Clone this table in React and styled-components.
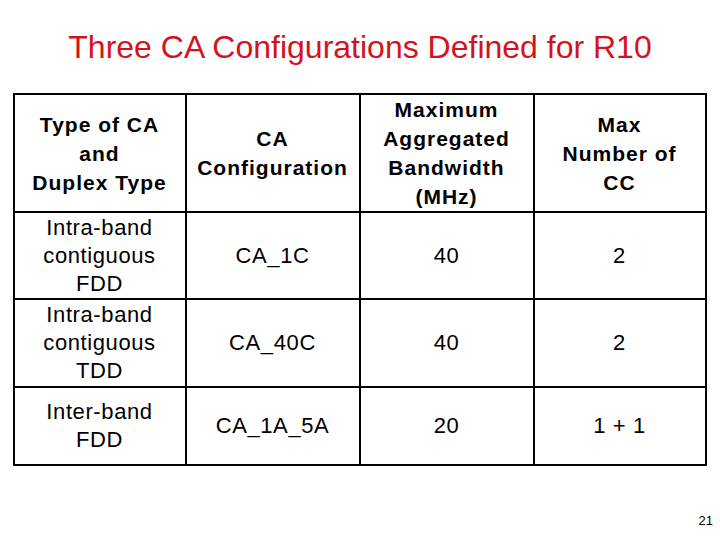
import React from "react";
import styled, { createGlobalStyle } from "styled-components";

const Global = createGlobalStyle`
  html, body { margin: 0; padding: 0; background: #fff; }
  body { font-family: "Liberation Sans", Arial, sans-serif; }
`;

const Slide = styled.div`
  width: 720px;
  height: 540px;
  position: relative;
  box-sizing: border-box;
  padding-top: 28px;
  display: flex;
  flex-direction: column;
  align-items: center;
  background: #fff;
`;

const Title = styled.h1`
  margin: 0;
  font-family: "Liberation Sans", Arial, sans-serif;
  font-weight: normal;
  font-size: 32px;
  line-height: 38px;
  color: #d4121c;
  text-align: center;
`;

const Table = styled.table`
  margin-top: 27px;
  margin-left: -1px;
  border-collapse: collapse;
  table-layout: fixed;
  width: 692px;
  color: #000;
`;

const Col = styled.col`
  width: ${(p) => p.$w}px;
`;

const Row = styled.tr`
  height: ${(p) => p.$h}px;
`;

const Cell = styled.td`
  border: 2px solid #000;
  padding: 0;
  text-align: center;
  vertical-align: middle;
  font-family: "Liberation Sans", Arial, sans-serif;
  font-size: ${(p) => (p.$head ? "21px" : "22px")};
  font-weight: ${(p) => (p.$head ? "bold" : "normal")};
  letter-spacing: ${(p) => (p.$head ? "1px" : "0.6px")};
  line-height: ${(p) => (p.$head ? "29px" : "28px")};
`;

const PageNum = styled.div`
  position: absolute;
  right: 7px;
  bottom: 12px;
  font-size: 13px;
  color: #000;
`;

const header = [
  ["Type of CA", "and", "Duplex Type"],
  ["CA", "Configuration"],
  ["Maximum", "Aggregated", "Bandwidth", "(MHz)"],
  ["Max", "Number of", "CC"],
];

const rows = [
  { h: 87, cells: [["Intra-band", "contiguous", "FDD"], ["CA_1C"], ["40"], ["2"]] },
  { h: 88, cells: [["Intra-band", "contiguous", "TDD"], ["CA_40C"], ["40"], ["2"]] },
  { h: 78, cells: [["Inter-band", "FDD"], ["CA_1A_5A"], ["20"], ["1 + 1"]] },
];

const Lines = ({ lines }) =>
  lines.map((l, i) => (
    <React.Fragment key={i}>
      {i > 0 && <br />}
      {l}
    </React.Fragment>
  ));

export default function App() {
  return (
    <>
      <Global />
      <Slide>
        <Title>Three CA Configurations Defined for R10</Title>
        <Table>
          <colgroup>
            <Col $w={172} />
            <Col $w={174} />
            <Col $w={174} />
            <Col $w={172} />
          </colgroup>
          <tbody>
            <Row $h={117}>
              {header.map((c, i) => (
                <Cell key={i} $head>
                  <Lines lines={c} />
                </Cell>
              ))}
            </Row>
            {rows.map((r, ri) => (
              <Row key={ri} $h={r.h}>
                {r.cells.map((c, i) => (
                  <Cell key={i}>
                    <Lines lines={c} />
                  </Cell>
                ))}
              </Row>
            ))}
          </tbody>
        </Table>
        <PageNum>21</PageNum>
      </Slide>
    </>
  );
}
